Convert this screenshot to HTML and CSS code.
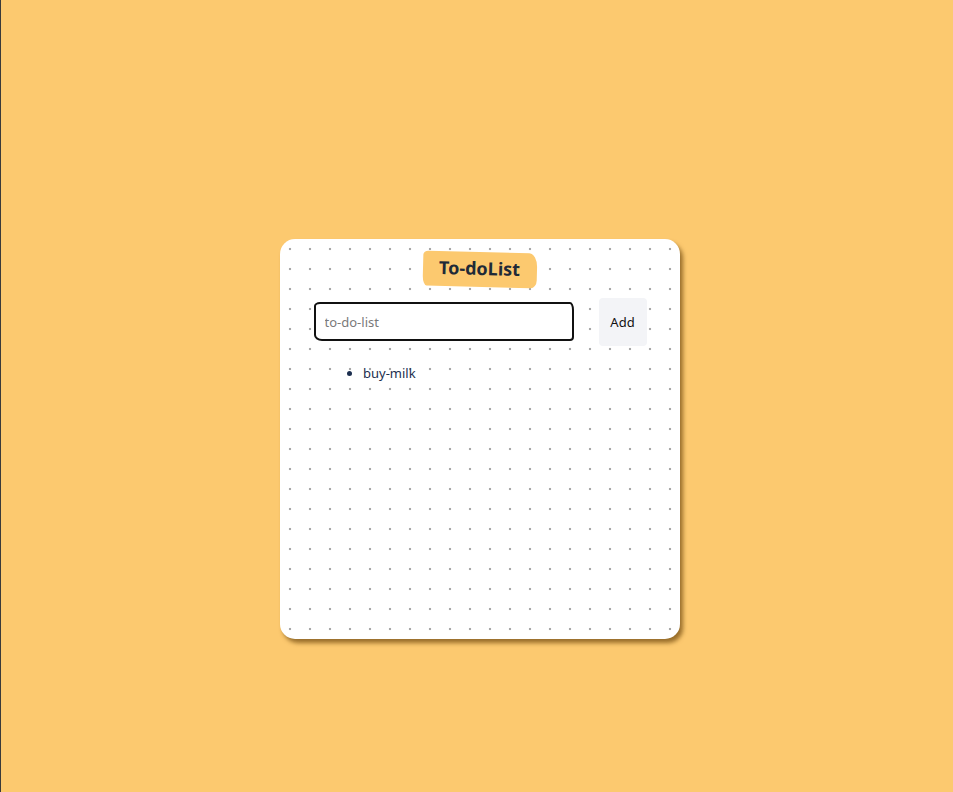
FILE: index.html
```html
<!DOCTYPE html>
<html>
<head>
<meta charset="utf-8">
<link rel="stylesheet" href="styles.css">
</head>
<body>
<div class="page">
  <div class="card">
    <h1 class="title">To-doList</h1>
    <div class="row">
      <input class="field" type="text" placeholder="to-do-list">
      <button class="add">Add</button>
    </div>
    <ul class="list">
      <li>buy-milk</li>
    </ul>
  </div>
</div>
</body>
</html>
```
FILE: styles.css
```css
html, body {
  margin: 0;
  padding: 0;
}
body {
  background: #fcc96f;
  border-left: 1px solid #3a3a3a;
  font-family: "Noto Sans", "Open Sans", sans-serif;
}
.page {
  min-height: 792px;
  box-sizing: border-box;
  display: flex;
  justify-content: center;
  align-items: center;
  padding-left: 6px;
  padding-top: 85px;
}
.card {
  width: 400px;
  height: 400px;
  box-sizing: border-box;
  border-radius: 15px;
  background-color: #fff;
  background-image: radial-gradient(circle at 10px 10px, #a8a8a8 1.1px, transparent 1.6px);
  background-size: 20px 20px;
  box-shadow: 3px 4px 4px rgba(120, 80, 20, 0.75);
  padding-top: 13px;
  display: flex;
  flex-direction: column;
  align-items: center;
}
.title {
  margin: 0;
  font-size: 18px;
  font-weight: 700;
  color: #1f2a37;
  background: #fcc96f;
  padding: 4px 17px 6px 16px;
  line-height: 25px;
  border-radius: 5px 8px 6px 4px / 4px 14px 8px 10px;
  transform: rotate(1.5deg);
}
.row {
  display: flex;
  align-items: center;
  gap: 25px;
  margin-top: 11px;
}
.field {
  width: 260px;
  height: 39px;
  box-sizing: border-box;
  border: 2px solid #111;
  border-radius: 6px 4px 4px 8px / 4px 8px 4px 6px;
  padding: 0 9px;
  font-family: inherit;
  font-size: 13px;
  background: #fff;
  outline: none;
}
.field::placeholder {
  color: #7a7a7a;
}
.add {
  width: 48px;
  height: 48px;
  border: none;
  border-radius: 4px;
  background: #f3f4f7;
  font-family: inherit;
  font-size: 13px;
  color: #111;
  padding: 0;
}
.list {
  align-self: stretch;
  margin: 17px 0 0 0;
  padding-left: 83px;
  font-size: 13px;
  color: #1c2f4f;
}
.list li {
  padding-left: 0;
  line-height: 20px;
}
```
